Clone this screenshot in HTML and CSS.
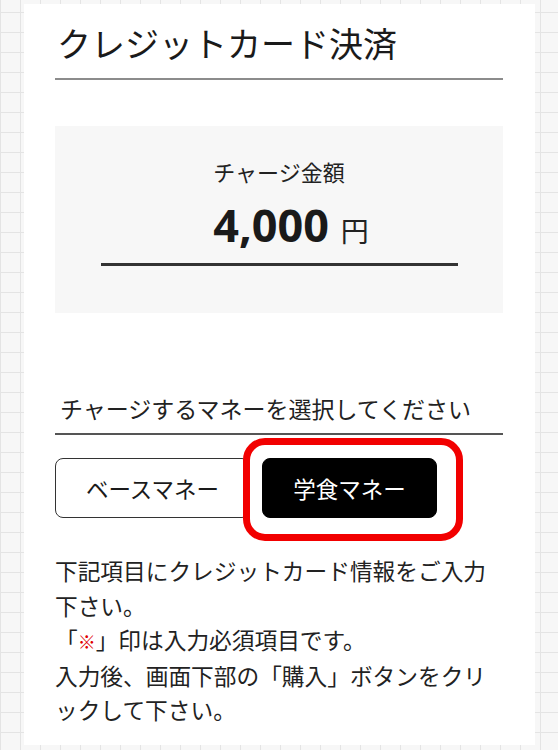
FILE: index.html
```html
<!DOCTYPE html>
<html lang="ja">
<head>
  <meta charset="UTF-8" />
  <meta name="viewport" content="width=device-width, initial-scale=1.0"/>
  <title>クレジットカード決済</title>
  <link rel="stylesheet" href="styles.css">
</head>
<body>
  <div class="page">
    <h1 class="title">クレジットカード決済</h1>

    <div class="amount-box">
      <p class="amount-label">チャージ金額</p>
      <p class="amount"><span class="amount-value">4,000</span> <span class="amount-unit">円</span></p>
    </div>

    <h2 class="section-title">チャージするマネーを選択してください</h2>

    <div class="money-select">
      <button type="button" class="money-btn">ベースマネー</button>
      <button type="button" class="money-btn selected">学食マネー</button>
    </div>

    <p class="notice">
      下記項目にクレジットカード情報をご入力下さい。<br>
      「<span class="required">※</span>」印は入力必須項目です。<br>
      入力後、画面下部の「購入」ボタンをクリックして下さい。
    </p>
  </div>
</body>
</html>
```

FILE: styles.css
```css
body {
  margin: 0;
  padding: 4px 0 0 24px;
  font-family: "Noto Sans CJK JP", "Noto Sans", sans-serif;
  color: #222;
  background-color: #f7f7f7;
  background-image:
    linear-gradient(#e4e4e4 1px, transparent 1px),
    linear-gradient(90deg, #e4e4e4 1px, transparent 1px);
  background-size: 20px 20px;
  background-position: 0 12px;
}
.page {
  width: 511px;
  height: 741px;
  box-sizing: border-box;
  background: white;
  padding: 0 32px 0 31px;
  overflow: hidden;
}
.title {
  margin: 0;
  padding: 13px 0 10px 2px;
  font-size: 34px;
  line-height: 51px;
  font-weight: normal;
  color: #1a1a1a;
  border-bottom: 2px solid #8c8c8c;
}
.amount-box {
  margin-top: 46px;
  height: 187px;
  box-sizing: border-box;
  padding-top: 29px;
  background: #f7f7f7;
  text-align: center;
}
.amount-label {
  margin: 0;
  font-size: 22px;
  line-height: 32px;
}
.amount {
  width: 357px;
  box-sizing: border-box;
  margin: 10px auto 0;
  padding: 0 0 0 24px;
  border-bottom: 3px solid #333;
  line-height: 55px;
}
.amount-value {
  font-family: "Noto Sans", sans-serif;
  font-size: 45px;
  font-weight: bold;
  color: #1a1a1a;
}
.amount-unit {
  font-size: 28px;
  margin-left: 8px;
}
.section-title {
  margin: 78px 0 0;
  padding: 0 0 8px 5px;
  font-size: 23px;
  line-height: 34px;
  font-weight: normal;
  border-bottom: 2px solid #555;
}
.money-select {
  display: flex;
  gap: 12px;
  margin-top: 23px;
}
.money-btn {
  width: 195px;
  height: 60px;
  border: 1.5px solid #333;
  border-radius: 8px;
  background: white;
  color: #1a1a1a;
  font-family: inherit;
  font-size: 22.5px;
  padding: 0;
}
.money-btn.selected {
  position: relative;
  width: 175px;
  background: black;
  border-color: black;
  color: white;
}
.money-btn.selected::after {
  content: "";
  position: absolute;
  top: -21px;
  left: -20px;
  right: -27px;
  bottom: -24px;
  border: 7px solid #f20000;
  border-radius: 22px;
}
.notice {
  margin: 36px 0 0;
  font-size: 22.7px;
  line-height: 34.5px;
}
.required {
  color: #e00000;
  font-size: 18px;
  font-weight: bold;
}
```
